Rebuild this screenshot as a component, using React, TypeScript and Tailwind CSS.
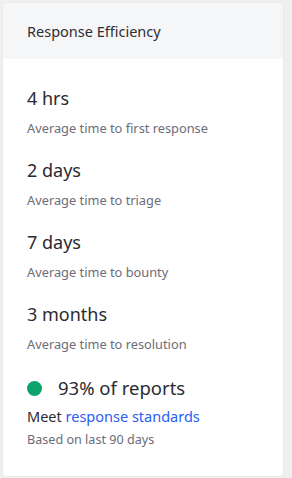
import React from 'react';

const stats = [
  { value: '4 hrs', label: 'Average time to first response' },
  { value: '2 days', label: 'Average time to triage' },
  { value: '7 days', label: 'Average time to bounty' },
  { value: '3 months', label: 'Average time to resolution' },
];

export default function App() {
  return (
    <div className="min-h-[478px] bg-[#efefef] p-[3px] pb-[2px] font-['Noto_Sans',sans-serif]">
      <div className="h-[473px] w-[280px] overflow-hidden rounded-[3px] bg-white shadow-[0_0_2px_rgba(0,0,0,0.08)]">
        {/* Header */}
        <div className="flex h-[56px] items-center bg-[#f5f6f8] px-6 pt-[2px]">
          <h2 className="text-[14.5px] font-normal text-[#2d2d33]">Response Efficiency</h2>
        </div>

        {/* Stats */}
        <div className="flex flex-col px-6 pt-[27px]">
          {stats.map((s) => (
            <div key={s.value} className="mb-[18px]">
              <div className="text-[18px] leading-[24px] text-[#2b2b30]">{s.value}</div>
              <div className="mt-[6px] text-[12.8px] leading-[24px] text-[#6c6c78]">{s.label}</div>
            </div>
          ))}

          <div className="mt-[2px] flex items-center">
            <span className="h-[15px] w-[15px] rounded-full bg-[#0ea36c]" />
            <span className="ml-[16px] text-[18.5px] leading-[24px] text-[#2b2b30]">93% of reports</span>
          </div>
          <div className="mt-[6px] text-[14.5px] leading-[20px] text-[#2b2b30]">
            Meet <a className="text-[#2a5cf6]">response standards</a>
          </div>
          <div className="mt-[4px] text-[12.6px] leading-[20px] text-[#6c6c78]">Based on last 90 days</div>
        </div>
      </div>
    </div>
  );
}
